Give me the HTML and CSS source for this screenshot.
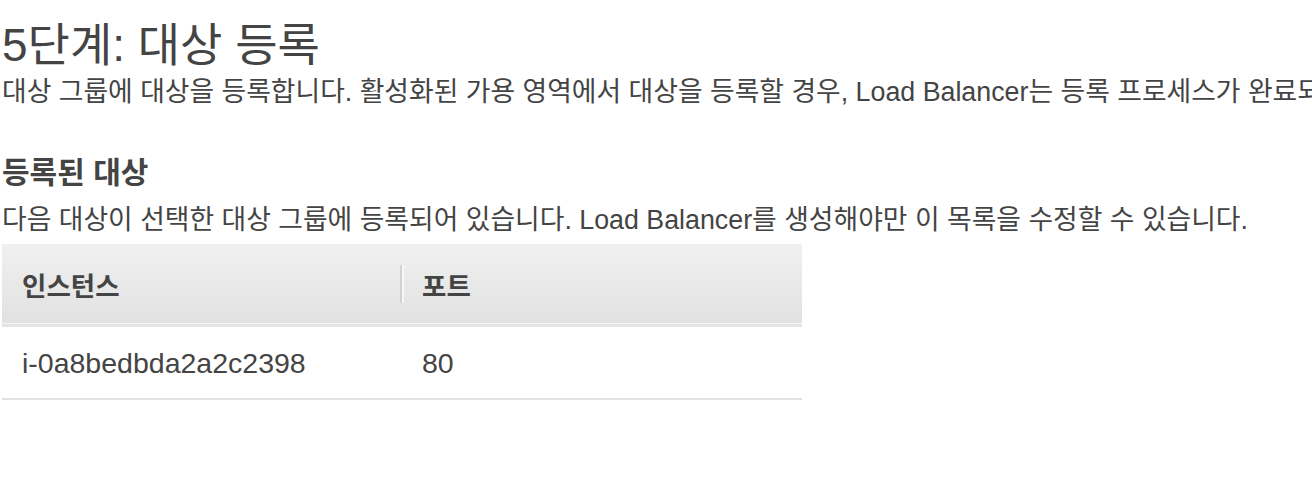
FILE: index.html
```html
<!DOCTYPE html>
<html lang="ko">
<head>
<meta charset="utf-8">
<title>5단계: 대상 등록</title>
<link rel="stylesheet" href="styles.css">
</head>
<body>
<main class="page">
  <h1 class="title">5단계: 대상 등록</h1>
  <p class="subtitle">대상 그룹에 대상을 등록합니다. 활성화된 가용 영역에서 대상을 등록할 경우, Load Balancer는 등록 프로세스가 완료되고 대상이 요청을 수신할 준비가 되면 즉시 대상으로 요청 라우팅을 시작합니다.</p>

  <h2 class="section-title">등록된 대상</h2>
  <p class="section-desc">다음 대상이 선택한 대상 그룹에 등록되어 있습니다. Load Balancer를 생성해야만 이 목록을 수정할 수 있습니다.</p>

  <div class="table">
    <div class="table-head">
      <div class="th th-first">인스턴스</div>
      <div class="th-divider"></div>
      <div class="th">포트</div>
    </div>
    <div class="table-row">
      <div class="td td-first">i-0a8bedbda2a2c2398</div>
      <div class="td">80</div>
    </div>
  </div>
</main>
</body>
</html>
```

FILE: styles.css
```css
html, body {
  margin: 0;
  padding: 0;
  background: #ffffff;
  overflow: hidden;
}

body {
  font-family: "Liberation Sans", "Noto Sans CJK KR", sans-serif;
  color: #444444;
}

.page {
  padding: 19px 0 0 2px;
}

.title {
  margin: 0;
  font-size: 46px;
  line-height: 52px;
  font-weight: 400;
  white-space: nowrap;
}

.subtitle {
  margin: 5px 0 0;
  font-size: 26.8px;
  line-height: 32px;
  white-space: nowrap;
}

.section-title {
  margin: 47px 0 0;
  font-size: 30px;
  line-height: 36px;
  font-weight: 700;
}

.section-desc {
  margin: 13px 0 0;
  font-size: 26.8px;
  line-height: 32px;
  white-space: nowrap;
}

.table {
  margin-top: 8px;
  width: 800px;
}

.table-head {
  display: flex;
  align-items: center;
  height: 80px;
  background: linear-gradient(to bottom, #f0f0f0, #e1e1e1);
  border-bottom: 3px solid #e4e4e4;
  box-shadow: inset 0 -1px 0 #f4f4f4;
}

.th {
  padding-left: 18px;
  font-size: 26.5px;
  font-weight: 700;
}

.th-first {
  width: 378px;
  padding-left: 20px;
}

.th-divider {
  width: 2px;
  height: 38px;
  background: #d2d2d2;
  border-right: 2px solid #f7f7f7;
}

.table-row {
  display: flex;
  align-items: center;
  height: 70px;
  margin-top: 1px;
  border-bottom: 2px solid #e2e2e2;
}

.td {
  font-size: 28.5px;
  padding-left: 20px;
}

.td-first {
  width: 380px;
}
```
